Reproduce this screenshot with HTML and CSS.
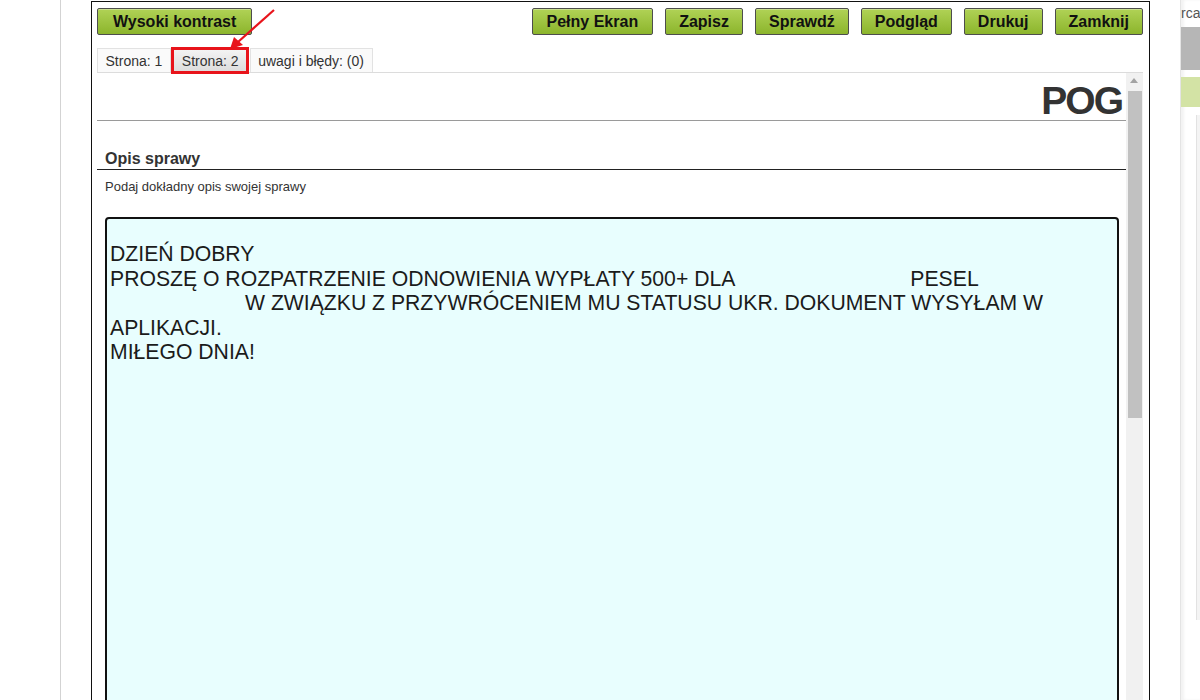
FILE: index.html
```html
<!DOCTYPE html>
<html lang="pl">
<head>
  <meta charset="UTF-8">
  <title>Opis sprawy</title>
  <link rel="stylesheet" href="styles.css">
</head>
<body>
  <div class="page">
    <div class="gutter"></div>

    <div class="window">
      <div class="toolbar">
        <button class="btn wide">Wysoki kontrast</button>
        <button class="btn push">Pełny Ekran</button>
        <button class="btn">Zapisz</button>
        <button class="btn">Sprawdź</button>
        <button class="btn">Podgląd</button>
        <button class="btn">Drukuj</button>
        <button class="btn">Zamknij</button>
      </div>

      <div class="tabs">
        <span class="tab">Strona: 1</span>
        <span class="tab active">Strona: 2</span>
        <span class="tab">uwagi i błędy: (0)</span>
      </div>

      <div class="content">
        <div class="sheet">
          <div class="doc-title">POG</div>
          <div class="section-title">Opis sprawy</div>
          <div class="hint">Podaj dokładny opis swojej sprawy</div>
          <div class="answer">
            <div>DZIEŃ DOBRY</div>
            <div>PROSZĘ O ROZPATRZENIE ODNOWIENIA WYPŁATY 500+ DLA<span class="gap gap-a"></span>PESEL</div>
            <div><span class="gap gap-b"></span>W ZWIĄZKU Z PRZYWRÓCENIEM MU STATUSU UKR. DOKUMENT WYSYŁAM W</div>
            <div>APLIKACJI.</div>
            <div>MIŁEGO DNIA!</div>
          </div>
        </div>
        <div class="scrollbar">
          <div class="scroll-up"></div>
          <div class="scroll-thumb"></div>
        </div>
      </div>
    </div>

    <div class="side">
      <div class="side-text">rca</div>
      <div class="side-bar"></div>
      <div class="side-green"></div>
      <div class="side-body">
        <div class="side-panel"></div>
      </div>
    </div>
  </div>

  <!-- annotation drawn over the screenshot -->
  <svg class="marker" width="300" height="90" viewBox="0 0 300 90">
    <rect x="172.5" y="48.5" width="75" height="24" fill="none" stroke="#e8141b" stroke-width="3"/>
    <line x1="274" y1="10" x2="238" y2="42" stroke="#e8141b" stroke-width="2.2"/>
    <polygon points="230,49 234,37 243,45" fill="#e8141b"/>
  </svg>
</body>
</html>
```

FILE: styles.css
```css
* { margin: 0; padding: 0; box-sizing: border-box; }
html, body {
  width: 1200px;
  height: 700px;
  overflow: hidden;
  background: #fff;
}
body {
  font-family: "Liberation Sans", Arial, sans-serif;
  color: #222;
  position: relative;
}
.page {
  display: flex;
  height: 700px;
}
.gutter {
  width: 61px;
  border-right: 1px solid #d3d3d3;
  flex-shrink: 0;
}

/* main form window */
.window {
  margin-left: 30px;
  margin-top: 1px;
  width: 1059px;
  height: 760px;
  flex-shrink: 0;
  border: 1px solid #111;
  padding: 6px 6px 0 5px;
  display: flex;
  flex-direction: column;
}
.toolbar {
  display: flex;
  gap: 12px;
}
.btn {
  height: 27px;
  padding: 0 13px;
  font-family: "Liberation Sans", Arial, sans-serif;
  font-size: 16px;
  font-weight: bold;
  color: #111;
  border: 1px solid #4d4d4d;
  border-radius: 2px;
  background: linear-gradient(#b0d256, #8cb52c);
  box-shadow: inset 0 1px 0 rgba(255, 255, 255, 0.35);
}
.btn.wide {
  padding: 0 15px;
}
.btn.push {
  margin-left: auto;
  padding: 0 14px;
}
.tabs {
  display: flex;
  gap: 2px;
  margin-top: 13px;
  height: 24px;
}
.tab {
  display: flex;
  align-items: center;
  padding: 0 8px 0 7.5px;
  font-size: 14px;
  color: #333;
  border: 1px solid #e2e2e2;
  border-bottom: none;
  background: #fafafa;
}
.tab.active {
  background: linear-gradient(#f4f4f4, #dcdcdc);
  border-color: #cfcfcf;
}
.content {
  display: flex;
  flex: 1;
  border-top: 1px solid #dcdcdc;
  min-height: 0;
}
.sheet {
  flex: 1;
  overflow: hidden;
}
.doc-title {
  height: 48px;
  border-bottom: 1px solid #9a9a9a;
  text-align: right;
  padding-right: 4px;
  font-size: 39px;
  line-height: 56px;
  letter-spacing: -2px;
  font-weight: bold;
  color: #333;
}
.section-title {
  padding: 29px 8px 1px;
  font-size: 16px;
  line-height: 18px;
  font-weight: bold;
  color: #333;
  border-bottom: 1px solid #222;
}
.hint {
  margin-top: 9px;
  padding-left: 8px;
  font-size: 13px;
  line-height: 16px;
  color: #333;
}
.answer {
  margin: 22px 7px 0 8px;
  height: 520px;
  border: 2px solid #111;
  border-radius: 4px;
  background: #e8fefe;
  padding: 23px 3px 0;
  font-size: 21.2px;
  line-height: 24.5px;
  color: #1b1b1b;
  white-space: nowrap;
}
.gap {
  display: inline-block;
}
.gap-a { width: 175px; }
.gap-b { width: 135px; }

/* fake scrollbar of the page view */
.scrollbar {
  width: 17px;
  background: #f1f1f1;
  display: flex;
  flex-direction: column;
  align-items: center;
}
.scroll-up {
  height: 17px;
  width: 17px;
  position: relative;
}
.scroll-up::after {
  content: "";
  position: absolute;
  left: 4px;
  top: 5px;
  border-left: 4px solid transparent;
  border-right: 4px solid transparent;
  border-bottom: 5px solid #a3a3a3;
}
.scroll-thumb {
  margin-top: 1px;
  width: 14px;
  margin-left: 1px;
  height: 327px;
  background: #c1c1c1;
}

/* neighbouring window, cut off by the edge */
.side {
  margin-left: 30px;
  flex: 1;
  border-left: 1px solid #e4e4e4;
  box-shadow: inset 3px 0 3px rgba(0, 0, 0, 0.05);
  display: flex;
  flex-direction: column;
  overflow: hidden;
}
.side-text {
  height: 27px;
  padding-top: 5px;
  font-size: 14px;
  color: #555;
  white-space: nowrap;
}
.side-bar {
  height: 43px;
  background: #b6b6b6;
}
.side-green {
  margin-top: 7px;
  height: 30px;
  background: #d3e3a5;
}
.side-body {
  flex: 1;
  padding: 8px 0 80px 15px;
  display: flex;
}
.side-panel {
  flex: 1;
  border-left: 1px solid #e2e2e2;
  background: #f4f4f4;
}

.marker {
  position: absolute;
  left: 0;
  top: 0;
  pointer-events: none;
}
```
